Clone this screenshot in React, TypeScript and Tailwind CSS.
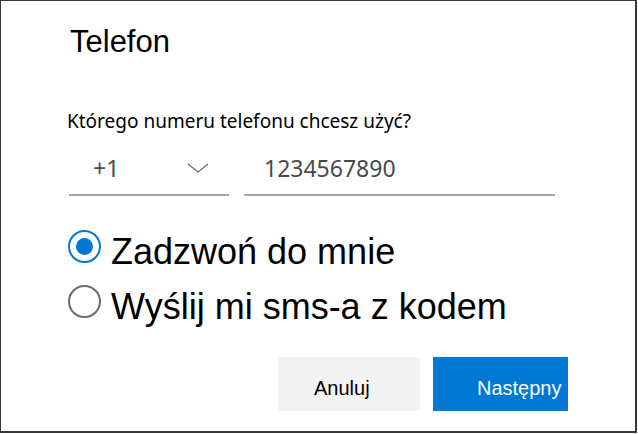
import React from "react";

export default function App() {
  return (
    <div className="w-[638px] h-[434px] bg-white">
      <div className="w-[637px] h-[433px] border-t border-l border-r-2 border-b-2 border-[#383838] bg-white flex flex-col pl-[66px] text-black">
        <h1
          className="mt-[23px] ml-[3px] text-[31px] leading-[36px] font-normal"
          style={{ fontFamily: '"Liberation Sans", Arial, sans-serif' }}
        >
          Telefon
        </h1>
        <p
          className="mt-[49px] text-[19px] leading-[24px] text-black"
          style={{ fontFamily: '"Noto Sans", "Open Sans", sans-serif' }}
        >
          Którego numeru telefonu chcesz użyć?
        </p>
        <div
          className="mt-[13px] flex gap-[15px] text-[#4a4a4a]"
          style={{ fontFamily: '"Noto Sans", "Open Sans", sans-serif' }}
        >
          <div className="w-[160px] h-[50px] border-b-2 border-[#a6a6a6] flex items-center pb-[4px] pl-[24px] pr-[20px] justify-between ml-[2px]">
            <span className="text-[23px] leading-[30px]">+1</span>
            <svg width="22" height="10" viewBox="0 0 22 10" fill="none">
              <path d="M1 1 L11 9 L21 1" stroke="#6a6a6a" strokeWidth="1.2" />
            </svg>
          </div>
          <div className="w-[311px] h-[50px] border-b-2 border-[#a6a6a6] flex items-center pb-[4px] pl-[20px]">
            <span className="text-[23px] leading-[30px]">1234567890</span>
          </div>
        </div>
        <div
          className="mt-[22px] flex flex-col"
          style={{ fontFamily: '"Liberation Sans", Arial, sans-serif' }}
        >
          <div className="h-[55px] flex items-start gap-[10px] ml-[1px]">
            <span className="mt-[12px] w-[33px] h-[33px] rounded-full border-2 border-[#0078d4] flex items-center justify-center shrink-0">
              <span className="w-[17px] h-[17px] rounded-full bg-[#0078d4]" />
            </span>
            <span className="mt-[14px] text-[36px] leading-[40px]">Zadzwoń do mnie</span>
          </div>
          <div className="h-[55px] flex items-start gap-[10px] ml-[1px]">
            <span className="mt-[12px] w-[33px] h-[33px] rounded-full border-2 border-[#6b6b6b] shrink-0" />
            <span className="mt-[14px] text-[36px] leading-[40px]">Wyślij mi sms-a z kodem</span>
          </div>
        </div>
        <div
          className="mt-[29px] flex justify-end gap-[13px] pr-[67px]"
          style={{ fontFamily: '"Liberation Sans", Arial, sans-serif' }}
        >
          <button className="w-[142px] h-[54px] bg-[#f3f3f3] text-black text-[20px] flex items-center justify-start pl-[36px] pt-[8px]">
            Anuluj
          </button>
          <button className="w-[135px] h-[54px] bg-[#0078d4] text-white text-[20px] flex items-center justify-start pl-[44px] pt-[8px]">
            Następny
          </button>
        </div>
      </div>
    </div>
  );
}
